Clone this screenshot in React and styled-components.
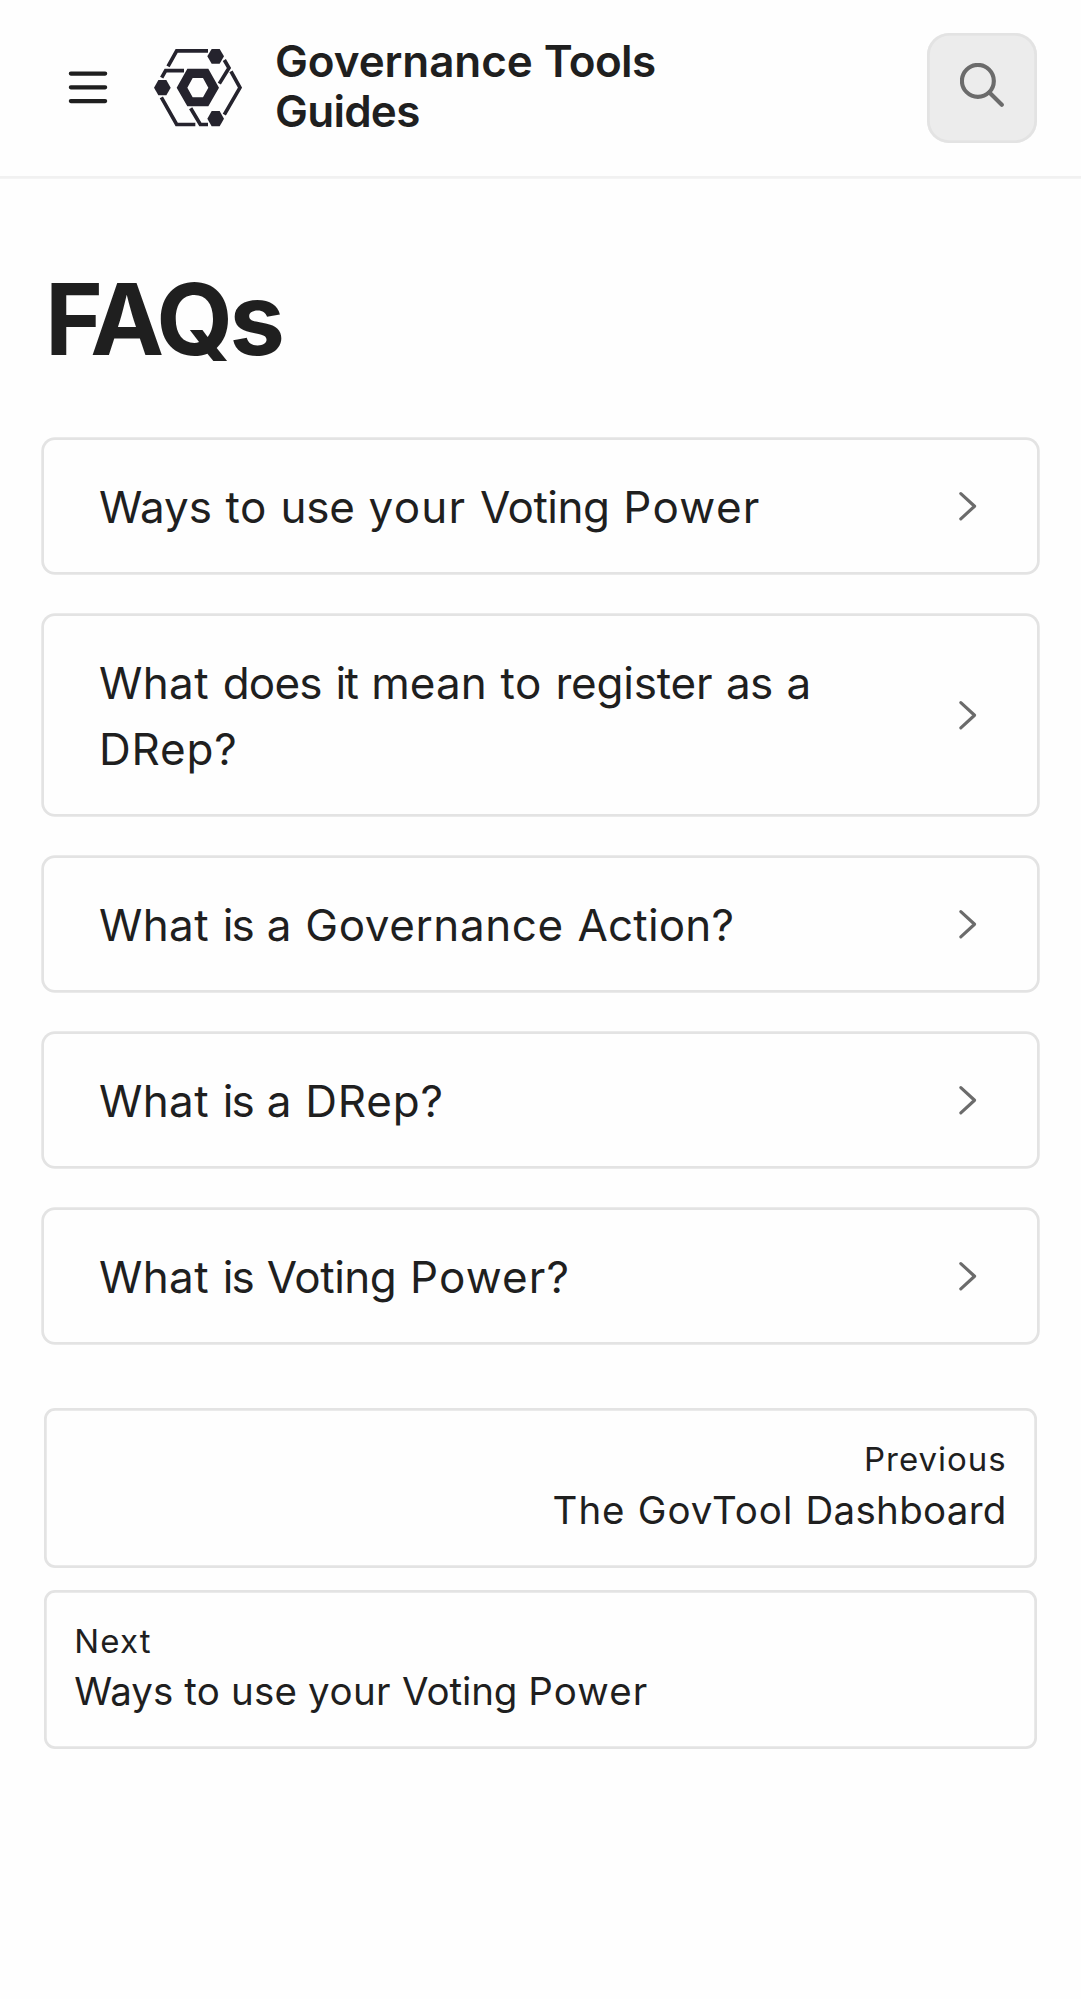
import React from "react";
import styled, { createGlobalStyle } from "styled-components";

const color = {
  page: "#fefefe",
  text: "#1f1f1f",
  muted: "#6b6b6b",
  line: "#e3e3e3",
  hairline: "#f1f1f1",
  control: "#ececec",
  logo: "#25232d",
};

const GlobalStyle = createGlobalStyle`
  *, *::before, *::after { box-sizing: border-box; }
  html, body { margin: 0; background: ${color.page}; }
`;

const Screen = styled.div`
  min-height: 1999px;
  font-family: Inter, "Liberation Sans", sans-serif;
  font-size: 44px;
  line-height: 66px;
  color: ${color.text};
  background: ${color.page};
`;

const Header = styled.header`
  display: flex;
  align-items: center;
  height: 176px;
  padding: 0 44px 0 66px;
  box-shadow: 0 2.75px 0 ${color.hairline};
`;

const IconButton = styled.button`
  display: flex;
  width: 44px;
  height: 44px;
  padding: 0;
  margin-right: 44px;
  border: 0;
  background: none;
  color: inherit;
`;

const Brand = styled.a`
  display: flex;
  align-items: center;
  gap: 33px;
  flex: 1;
  color: inherit;
  text-decoration: none;
`;

const BrandName = styled.div`
  max-width: 440px;
  margin-bottom: 4px;
  font-weight: 600;
  line-height: 50px;
`;

const SearchButton = styled.button`
  display: flex;
  justify-content: center;
  width: 110px;
  height: 110px;
  padding: 30px 0 0;
  border: 0;
  border-radius: 22px;
  box-shadow: inset 0 0 0 2.75px ${color.line};
  background: ${color.control};
  color: ${color.muted};
`;

const Main = styled.main`
  display: flex;
  flex-direction: column;
  padding: 81px 44px 0;
`;

const Title = styled.h1`
  margin: 0 0 59px;
  padding-left: 1px;
  font-size: 99px;
  font-weight: 700;
  line-height: 124px;
  letter-spacing: -3.75px;
`;

const CardList = styled.div`
  display: flex;
  flex-direction: column;
  gap: 44px;
`;

const Card = styled.a`
  display: flex;
  align-items: center;
  justify-content: space-between;
  gap: 44px;
  padding: 0 55px;
  border-radius: 11px;
  box-shadow: 0 0 0 2.75px ${color.line};
  color: inherit;
  text-decoration: none;

  svg { flex: none; color: ${color.muted}; }
`;

const CardLabel = styled.span`
  padding: 34px 0 32px;
  word-spacing: 1.375px;
`;

const Word = styled.span`
  letter-spacing: ${(p) => p.$tracking}px;
`;

const Pager = styled.nav`
  display: flex;
  flex-direction: column;
  gap: 22px;
  margin-top: 66px;
`;

const PagerLink = styled.a`
  display: flex;
  flex-direction: column;
  align-items: ${(p) => (p.$end ? "flex-end" : "flex-start")};
  gap: 2.5px;
  padding: 30.25px 30.25px 29.75px;
  border-radius: 11px;
  box-shadow: inset 0 0 0 2.75px ${color.line};
  color: inherit;
  text-decoration: none;
`;

const PagerLabel = styled.span`
  font-size: 33px;
  line-height: 42px;
`;

const PagerTitle = styled.span`
  font-size: 38.5px;
  line-height: 55px;
  word-spacing: ${(p) => p.$wordSpacing}px;
`;

/* Each word carries its own tracking, in pixels. */
const Tracked = ({ words }) =>
  words.map(([word, tracking], i) => (
    <React.Fragment key={i}>
      {i > 0 && " "}
      <Word $tracking={tracking}>{word}</Word>
    </React.Fragment>
  ));

const MenuIcon = () => (
  <svg width="44" height="44" viewBox="0 0 16 16" fill="none" stroke="currentColor" strokeWidth="1.5" strokeLinecap="round">
    <path d="M1.75 2.75H14.25M1.75 7.75H14.25M1.75 12.75H14.25" />
  </svg>
);

const SearchIcon = () => (
  <svg width="44" height="44" viewBox="0 0 16 16" fill="none" stroke="currentColor" strokeWidth="1.5" strokeLinecap="round">
    <circle cx="6.5" cy="6.5" r="5.8" />
    <path d="M10.7 10.7L15.2 15.2" />
  </svg>
);

const ChevronIcon = () => (
  <svg width="33" height="33" viewBox="0 0 12 12" fill="none" stroke="currentColor" strokeWidth="1.15" strokeLinecap="round" strokeLinejoin="round">
    <path d="M4.3 1.3L9.3 5.9L4.3 10.5" />
  </svg>
);

const Logo = () => (
  <svg width="88" height="77.3" viewBox="42 40 264 232" fill={color.logo}>
    <g fill="none" stroke={color.logo} strokeWidth="11">
      <path d="M84 92L110 45.500H204" />
      <path d="M65 126L77 105H132" />
      <path d="M253 73L267 97L238 144" />
      <path d="M273 107L300 156L253 237" />
      <path d="M64 185L110 266.500H166" />
      <path d="M152 218L181 266.500H204" />
    </g>
    <path d="M202 62L215 40H239L252 62L239 84H215Z" />
    <path d="M42 156L55 133H79L92 156L79 179H55Z" />
    <path d="M202 249L215 226H239L252 249L239 272H215Z" />
    <path
      fillRule="evenodd"
      d="M110 156L142 99H205L237 156L205 212H142ZM142 156L158 185H189L205 156L189 127H158Z"
    />
  </svg>
);

const brand = [["Governance", -0.1], ["Tools", -0.6], ["Guides", -0.75]];

const topics = [
  [["Ways", -0.09], ["to", 0.45], ["use", -0.2], ["your", 1.2], ["Voting", -0.5], ["Power", 1.32]],
  [
    ["What", 0.37], ["does", -0.8], ["it", -1.55], ["mean", 0.05], ["to", 0.45],
    ["register", -0.22], ["as", -0.6], ["a", 0], ["DRep?", 0.8],
  ],
  [["What", 0.37], ["is", -1.8], ["a", 0], ["Governance", 0.59], ["Action?", 0.19]],
  [["What", 0.37], ["is", -1.8], ["a", 0], ["DRep?", 0.8]],
  [["What", 0.37], ["is", -1.8], ["Voting", -0.5], ["Power?", 1.1]],
];

const previousPage = {
  label: [["Previous", 1]],
  title: [["The", 0.95], ["GovTool", 0.95], ["Dashboard", 0.3]],
};

const nextPage = {
  label: [["Next", 1.2]],
  title: [["Ways", 0], ["to", 0.2], ["use", 0.2], ["your", 0.4], ["Voting", -0.1], ["Power", 1.1]],
};

export default function App() {
  return (
    <>
      <GlobalStyle />
      <Screen>
        <Header>
          <IconButton aria-label="Menu">
            <MenuIcon />
          </IconButton>
          <Brand>
            <Logo />
            <BrandName>
              <Tracked words={brand} />
            </BrandName>
          </Brand>
          <SearchButton aria-label="Search">
            <SearchIcon />
          </SearchButton>
        </Header>
        <Main>
          <Title>FAQs</Title>
          <CardList>
            {topics.map((words, i) => (
              <Card key={i}>
                <CardLabel>
                  <Tracked words={words} />
                </CardLabel>
                <ChevronIcon />
              </Card>
            ))}
          </CardList>
          <Pager>
            <PagerLink $end>
              <PagerLabel>
                <Tracked words={previousPage.label} />
              </PagerLabel>
              <PagerTitle $wordSpacing={1.45}>
                <Tracked words={previousPage.title} />
              </PagerTitle>
            </PagerLink>
            <PagerLink>
              <PagerLabel>
                <Tracked words={nextPage.label} />
              </PagerLabel>
              <PagerTitle $wordSpacing={0.17}>
                <Tracked words={nextPage.title} />
              </PagerTitle>
            </PagerLink>
          </Pager>
        </Main>
      </Screen>
    </>
  );
}
